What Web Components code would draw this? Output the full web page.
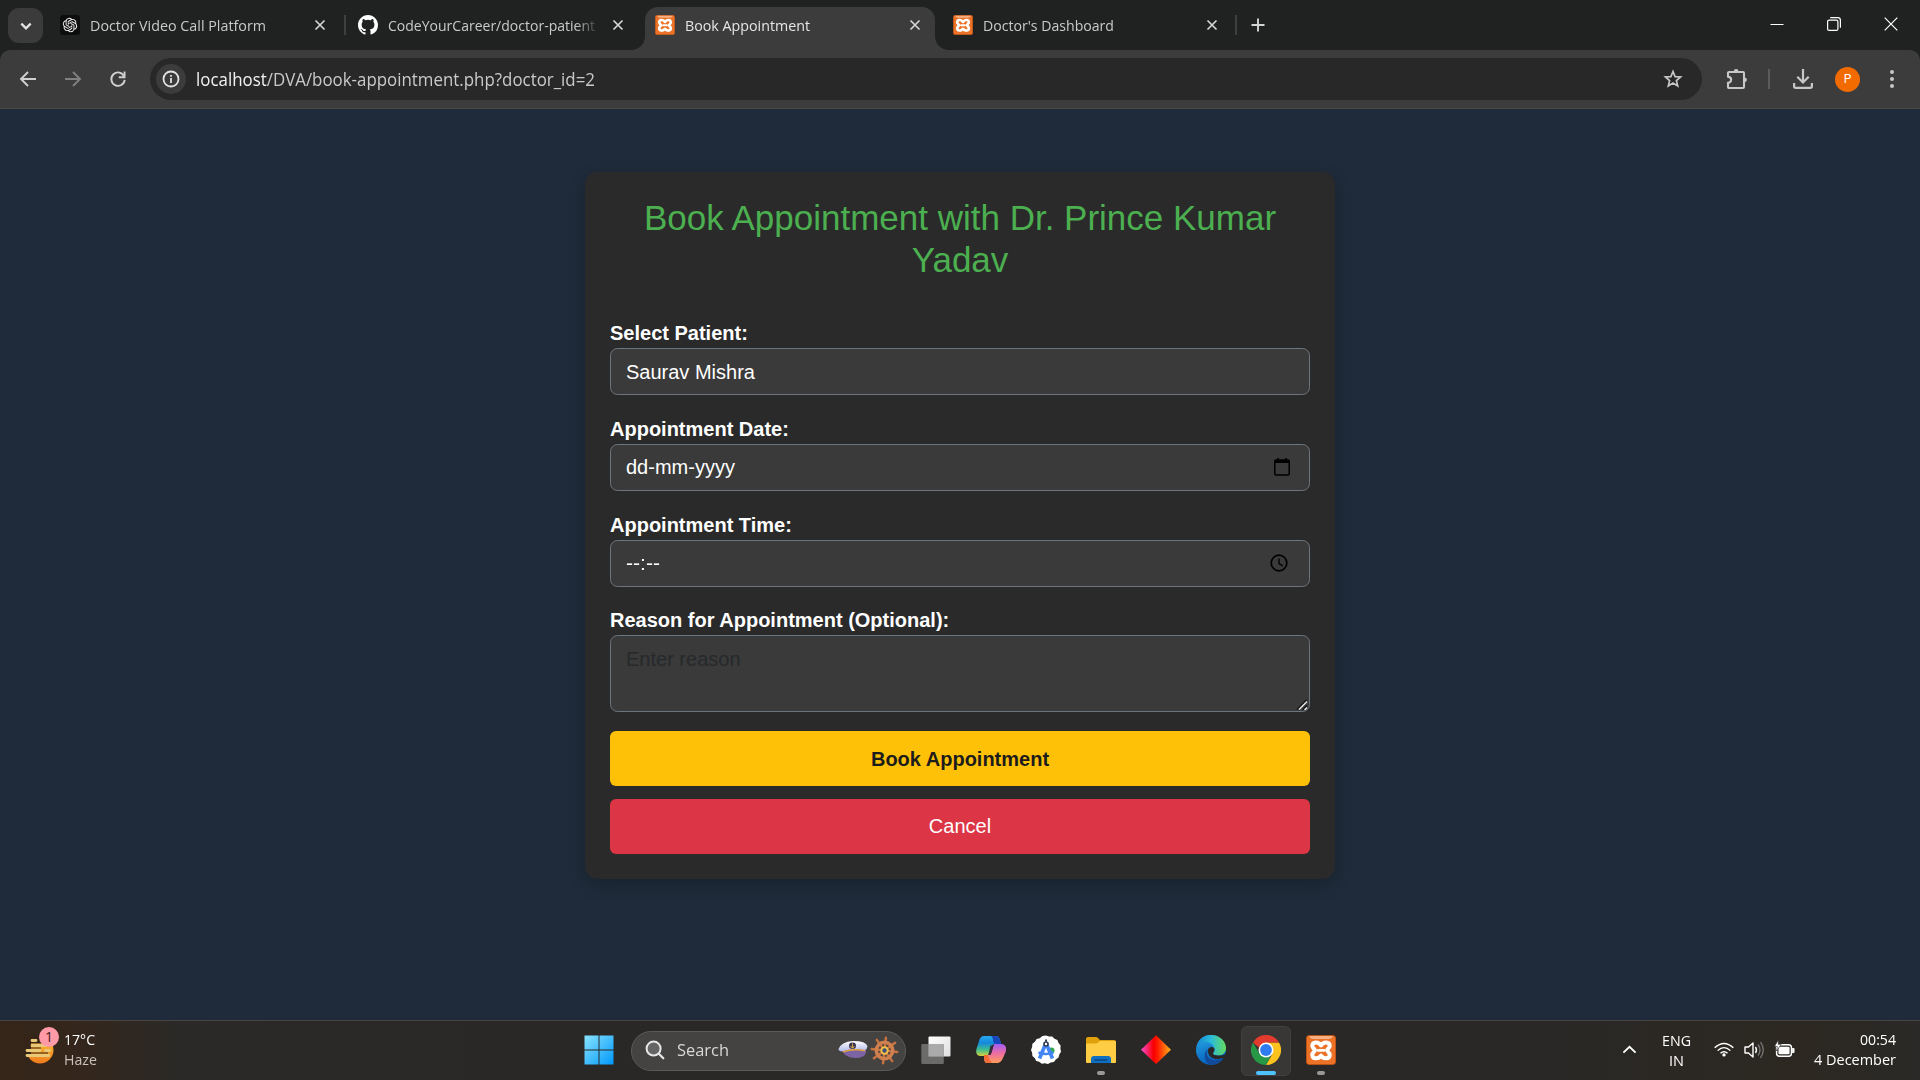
<!DOCTYPE html>
<html lang="en"><head><meta charset="utf-8"><title>Book Appointment</title>
<style>
html,body{margin:0;height:1080px;overflow:hidden;background:#1f2b3a}
body{font-family:"Open Sans","Noto Sans",sans-serif}
</style></head><body>
<desktop-screen></desktop-screen>
<script>
const XAMPP='<rect x=".4" y=".4" width="29.2" height="29.2" rx="3" fill="#ec7227" stroke="#c9540f" stroke-width=".8"/><path d="M3 1h24q-1 3-5 3H8Q4 4 3 1z" fill="#f5b184"/><path d="M15 10.400C12.500 6.300 6.300 6.600 6.300 11c0 2.200 2.600 3 2.600 4.300s-2.600 2.200-2.600 4.600c0 4.200 6.200 4.600 8.700.8 2.500 3.800 8.700 3.400 8.700-.8 0-2.400-2.600-3.200-2.600-4.600s2.600-2.100 2.600-4.300C23.700 6.600 17.500 6.300 15 10.400z" fill="none" stroke="#fff" stroke-width="4" stroke-linejoin="round"/><path d="M12 15.400h6" stroke="#fff" stroke-width="2.700" stroke-linecap="round"/>';
const ICONS={
 down:['0 0 12 12','<path d="M2 4l4 4 4-4" fill="none" stroke="#e3e3e3" stroke-width="2"/>'],
 gpt:['0 0 20 20','<rect width="20" height="20" rx="3" fill="#0d0d0d"/><g transform="translate(2.800 2.800) scale(.6)" fill="#f2f2f2"><path d="M22.280 9.820a5.980 5.980 0 0 0-.52-4.910 6.050 6.050 0 0 0-6.510-2.900A6.070 6.070 0 0 0 4.980 4.180a5.980 5.980 0 0 0-4 2.900 6.050 6.050 0 0 0 .75 7.100 5.980 5.980 0 0 0 .51 4.910 6.050 6.050 0 0 0 6.510 2.900A5.980 5.980 0 0 0 13.260 24a6.060 6.060 0 0 0 5.770-4.210 5.990 5.990 0 0 0 4-2.900 6.060 6.060 0 0 0-.75-7.070zm-9.020 12.610a4.480 4.480 0 0 1-2.880-1.040l4.920-2.840a.8.8 0 0 0 .39-.68v-6.740l2.020 1.170.04.05v5.580a4.500 4.500 0 0 1-4.490 4.500zM3.600 18.300a4.470 4.470 0 0 1-.54-3.010l4.930 2.850a.77.77 0 0 0 .78 0l5.840-3.370v2.330l-4.870 2.850a4.500 4.500 0 0 1-6.140-1.650zM2.340 7.900a4.490 4.490 0 0 1 2.370-1.970v5.680a.77.77 0 0 0 .39.68l5.810 3.350-2.020 1.170-4.900-2.770A4.500 4.500 0 0 1 2.340 7.900zm16.600 3.850l-5.840-3.380 2.020-1.160 4.900 2.780a4.490 4.490 0 0 1-.68 8.100v-5.680a.79.79 0 0 0-.4-.66zm2-3.020l-4.910-2.870a.78.78 0 0 0-.79 0L9.410 9.230V6.900l4.860-2.800a4.500 4.500 0 0 1 6.680 4.640zM8.310 12.860l-2.020-1.160V6.070a4.500 4.500 0 0 1 7.380-3.450L8.700 5.460a.8.800 0 0 0-.39.680zm1.100-2.360l2.600-1.500 2.600 1.500v3l-2.600 1.500-2.600-1.500z"/></g>'],
 github:['0 0 16 16','<path fill="#fff" d="M8 0C3.580 0 0 3.580 0 8c0 3.540 2.290 6.530 5.470 7.590.4.070.55-.17.55-.38 0-.19-.01-.82-.01-1.490-2.010.37-2.530-.49-2.690-.94-.09-.23-.48-.94-.82-1.130-.28-.15-.68-.52-.01-.53.63-.01 1.080.58 1.230.82.72 1.210 1.870.87 2.330.66.07-.52.28-.87.51-1.070-1.780-.2-3.640-.89-3.640-3.950 0-.87.310-1.590.82-2.150-.08-.2-.36-1.020.08-2.120 0 0 .67-.21 2.200.82a7.700 7.700 0 0 1 4 0c1.530-1.040 2.200-.82 2.200-.82.44 1.100.16 1.920.08 2.120.51.56.82 1.270.82 2.150 0 3.070-1.870 3.750-3.650 3.950.29.25.54.73.54 1.480 0 1.070-.01 1.930-.01 2.200 0 .21.15.46.55.38A8.010 8.010 0 0 0 16 8c0-4.420-3.580-8-8-8z"/>'],
 xampp:['0 0 30 30',XAMPP],
 x:['0 0 12 12','<path d="M1.500 1.500l9 9M10.500 1.500l-9 9" stroke="#d5d5d5" stroke-width="1.700"/>'],
 plus:['0 0 14 14','<path d="M7 .5v13M.5 7h13" stroke="#d5d5d5" stroke-width="1.900"/>'],
 min:['0 0 14 14','<path d="M.5 7.500h13" stroke="#fff"/>'],
 restore:['0 0 14 14','<rect x=".600" y="3.100" width="10.300" height="10.300" rx="1.500" fill="none" stroke="#fff" stroke-width="1.200"/><path d="M3.200.6h7.500q2.700 0 2.700 2.700v7.500" fill="none" stroke="#fff" stroke-width="1.200"/>'],
 winx:['0 0 14 14','<path d="M.7.7l12.600 12.600M13.300.7L.7 13.300" stroke="#fff" stroke-width="1.200"/>'],
 back:['0 0 18 18','<path d="M17 9H2.500M9 2L2 9l7 7" fill="none" stroke="#d0d0d0" stroke-width="1.900"/>'],
 fwd:['0 0 18 18','<path d="M1 9h14.500M9 2l7 7-7 7" fill="none" stroke="#808080" stroke-width="1.900"/>'],
 reload:['0 0 18 18','<path d="M15.200 6.500A6.700 6.700 0 1 0 15.700 9.800" fill="none" stroke="#d0d0d0" stroke-width="1.900"/><path d="M16.500 1.500v6.700H9.800V6.300h4.800V1.500z" fill="#d0d0d0"/>'],
 info:['0 0 18 18','<circle cx="9" cy="9" r="7.500" fill="none" stroke="#e3e3e3" stroke-width="1.800"/><path d="M9 8v5M9 5v1.700" stroke="#e3e3e3" stroke-width="1.800"/>'],
 star:['0 0 20 20','<path d="M10 2.500l2.100 5.100 5.500.4-4.200 3.600 1.300 5.400-4.700-2.900L5.300 17l1.300-5.400L2.400 8l5.500-.4z" fill="none" stroke="#c7c7c7" stroke-width="1.700"/>'],
 puzzle:['0 0 22 22','<path d="M3 4h14q1 0 1 1v14q0 1-1 1H3q-1 0-1-1v-4.200c4.200-.6 4.200-5.600 0-6.200V5q0-1 1-1z" fill="none" stroke="#c7c7c7" stroke-width="2.100"/><path d="M7.700 3.500a2.400 2.400 0 0 1 4.800 0zM18.500 9.400a2.400 2.400 0 0 1 0 4.800z" fill="#c7c7c7"/>'],
 download:['0 0 20 20','<path d="M10 0v13M4.300 7.800L10 13.500l5.700-5.700" fill="none" stroke="#c7c7c7" stroke-width="2.200"/><path d="M1.100 14v3.300q0 1.600 1.600 1.600h14.600q1.600 0 1.600-1.600V14" fill="none" stroke="#c7c7c7" stroke-width="2.200"/>'],
 dots:['0 0 6 20','<g fill="#c7c7c7"><circle cx="3" cy="3" r="2"/><circle cx="3" cy="10" r="2"/><circle cx="3" cy="17" r="2"/></g>'],
 calendar:['0 0 18 20','<path d="M3 3h12q1.200 0 1.200 1.200v12.600q0 1.200-1.200 1.200H3q-1.200 0-1.200-1.200V4.200Q1.800 3 3 3z" fill="none" stroke="#000" stroke-width="1.500"/><path d="M1.500 3h15v3h-15zM4 1h1.800v2H4zM12.200 1H14v2h-1.800z"/>'],
 clock:['0 0 18 18','<circle cx="9" cy="9" r="7.800" fill="none" stroke="#000" stroke-width="1.700"/><path d="M9 4.600v5l3.800 2.300" fill="none" stroke="#000" stroke-width="1.400"/>'],
 grip:['0 0 11 11','<path d="M0 10.500L9.500 1M6 10.500l4-4" stroke="#111" stroke-width="1.500"/><path d="M2 10.500L10 2.500M7.500 11L10 8.500" stroke="#e0e0e0" stroke-width="1.600"/>'],
 weather:['0 0 32 32','<defs><linearGradient id="a" x1="0" y1="0" x2="0" y2="1"><stop offset="0" stop-color="#ffc83a"/><stop offset="1" stop-color="#ee7a1c"/></linearGradient></defs><circle cx="16" cy="16" r="13.500" fill="url(#a)"/><path d="M0 0h32v5H20v4H0z" fill="#352519"/><path d="M0 4h20v4H7v12H0z" fill="#352519"/><g stroke="#e9c978" stroke-width="2.800" stroke-linecap="round"><path d="M8 6.500h4M8 11.500h14M3 16.500h13M21.500 16.500h4M3 21.500h22"/></g><path d="M7 9h14M5 14h12M6 19h18" stroke="#3a291b" stroke-width="1.500" opacity=".65"/>'],
 start:['0 0 30 30','<defs><linearGradient id="a" x2="1" y2="1"><stop stop-color="#89e3ff"/><stop offset="1" stop-color="#0098fa"/></linearGradient></defs><path fill="url(#a)" d="M.5.500h14v14H.5zM15.500.500h14v14h-14zM.5 15.500h14v14H.5zM15.500 15.500h14v14h-14z"/>'],
 search:['0 0 20 20','<circle cx="8.600" cy="8.600" r="7" fill="#656565" stroke="#e7e7e7" stroke-width="2"/><path d="M13.800 13.800l4.500 4.500" stroke="#e7e7e7" stroke-width="2.200" stroke-linecap="round"/>'],
 hat:['0 0 30 20','<defs><linearGradient id="a" x1="0" y1="0" x2="0" y2="1"><stop stop-color="#fff"/><stop offset="1" stop-color="#b0b8ea"/></linearGradient></defs><path d="M5 11q10-3 23-1 1 9-11 9Q8 18.500 5 13z" fill="#7c64a4"/><path d="M.5 9.500Q3 2 15 1q13 0 14.500 5.500 0 2.500-3 4.500-11-3-22 1-4 0-4-2.500z" fill="url(#a)"/><path d="M5 12.300q11-3.600 22-1" stroke="#e0a040" stroke-width="1.600" fill="none"/><circle cx="14.500" cy="6" r="3.500" fill="#35324c"/><path d="M14.500 3.500v5M12.800 6.200q.2 2.200 1.700 2.200t1.700-2.200" stroke="#e0b050" stroke-width=".9" fill="none"/>'],
 wheel:['0 0 30 30','<g stroke="#c8733f" stroke-width="2.500" stroke-linecap="round"><path d="M16.500 1.800l-3 26.400M26 7L4 23M28.200 16.500l-26.400-3M23 26L7 4"/></g><circle cx="15" cy="15" r="8.500" fill="none" stroke="#d0804e" stroke-width="3.600"/><circle cx="15" cy="15" r="3.300" fill="#39507a" stroke="#f2c04a" stroke-width="2"/>'],
 taskview:['0 0 30 30','<defs><linearGradient id="a" x2="1" y2="1"><stop stop-color="#fff"/><stop offset="1" stop-color="#dedede"/></linearGradient></defs><rect x="7.500" y="1.500" width="22" height="20" rx="1" fill="url(#a)"/><rect x=".3" y="9" width="22.500" height="20" rx="1" fill="#777" opacity=".85"/><path d="M7.500 9h15.300v12.500H7.500z" fill="#aaa"/>'],
 copilot:['0 0 30 30','<defs><linearGradient id="a" x1="0" y1="0" x2="0" y2="1"><stop stop-color="#28a9ee"/><stop offset=".35" stop-color="#1388dd"/><stop offset=".7" stop-color="#42c08a"/><stop offset="1" stop-color="#dccf3c"/></linearGradient><linearGradient id="b" x1="0" y1="0" x2="0" y2="1"><stop stop-color="#a25cf4"/><stop offset=".5" stop-color="#ee6f9f"/><stop offset="1" stop-color="#ff9d5a"/></linearGradient></defs><path d="M8 1h12q3 0 4 4l1 4h-6q-3 0-4 4l-3 8H4q-5-1-3.500-7L3 6q1.500-5 5-5z" fill="url(#a)"/><path d="M15 1h5q3 0 4 4l1 4h-5q-3 0-3-4 0-3-2-4z" fill="#1747ba"/><path d="M18 9h8q5 1 4 7l-3 7q-2 5-6 5H11q-3 0-3-5l1-3h3q3 0 4-4z" fill="url(#b)"/><path d="M8 20h4q1 5 4 8h-5q-3-1-3-8z" fill="#f36a35"/><path d="M14.500 10.500h3L14.700 20h-2.400z" fill="#332e37"/>'],
 studio:['0 0 30 30','<path fill="#fff" d="M15 .5l3 1.100 3.200-.1 2.300 2.200 2.900 1.200 1.200 3 2 2.500-.2 3.200.6 3.100-1.700 2.800-.8 3.100-2.700 1.800-1.900 2.500-3.200.5L17 29l-3-.7-3.200.4-2.600-1.900-3-.9-1.500-2.800L1.400 21l-.3-3.200L0 14.900l1.100-3L1.400 8.700l2.500-2 1.700-2.700 3.100-.7L11.400.9z"/><circle cx="20.500" cy="15.500" r="3" fill="#34a853"/><path d="M15 8L8.500 23.500M15 8l6.500 15.500" stroke="#4285f4" stroke-width="3.700"/><path d="M7.500 17.500q7.500 3 15-.2" stroke="#4285f4" stroke-width="2.500" fill="none"/><circle cx="15" cy="9" r="2" fill="#fff" stroke="#303c50" stroke-width="1.600"/><path d="M15 4.500v2" stroke="#303c50" stroke-width="2"/>'],
 folder:['0 0 30 30','<path d="M0 4q0-2 2-2h8q1 0 2 1l2 2H28q2 0 2 2v8H0z" fill="#dfa00b"/><path d="M0 9.500q0-1 1-1h8.500q1.500 0 2.500-1L14 6h15q1 0 1 1v20q0 1-1 1H1q-1 0-1-1z" fill="#ffcd43"/><path d="M5 28v-4q0-3 3-3h14q3 0 3 3v4z" fill="#0f6fc0"/><path d="M8.500 25h13" stroke="#0a4484" stroke-width="1.500"/>'],
 diamond:['0 0 30 30','<defs><linearGradient id="a"><stop stop-color="#ff4bd8"/><stop offset=".42" stop-color="#f80000"/><stop offset=".55" stop-color="#ff1a00"/><stop offset="1" stop-color="#ffb319"/></linearGradient></defs><path d="M15 .3L30 14.700 15 29 0 14.700z" fill="url(#a)"/>'],
 edge:['0 0 30 30','<defs><linearGradient id="a"><stop stop-color="#1585d6"/><stop offset=".5" stop-color="#2bbbd8"/><stop offset="1" stop-color="#65dc5c"/></linearGradient><linearGradient id="b" x1="0" y1="0" x2=".3" y2="1"><stop stop-color="#2aa9e6"/><stop offset="1" stop-color="#0561bd"/></linearGradient></defs><circle cx="15" cy="15" r="15" fill="url(#b)"/><path d="M.3 12C2 4 8 0 15 0c9 0 15 6.500 15 13 0 5-4 7.500-8 7.500-3 0-5-1-5-2 0-1 1.500-1.800 1.500-4C18.500 10 14 7 9.500 7 5 7 2 9 .3 12z" fill="url(#a)"/><path d="M11.500 14c-3 8 4 15 16 9-3 4.500-7 7-12.500 7C8 28 7 18 11.500 14z" fill="#124a99"/><path d="M17 18.500c0-1 1.500-1.800 1.500-4 0-1.500-1-2.500-3-2.500-3 0-4 3-3.500 5.500.7 4 5 7 10 6.500 3-.3 5-1.500 6-1l2-4c-2 1.500-5 1.500-8 1.500-3 0-5-1-5-2z" fill="#292827"/><path d="M30 17v13h-9q5-2 7-7z" fill="#292827"/>'],
 chrome:['0 0 30 30','<path d="M15 15V7.500h13A15 15 0 0 1 15 30l6.500-11.300z" fill="#fcc31e"/><path d="M2 7.500l6.500 11.200L15 22.500l4.500-1L15 30A15 15 0 0 1 2 7.500z" fill="#269846"/><path d="M2 7.500A15 15 0 0 1 28 7.500H15l-7 5z" fill="#e33b2e"/><circle cx="15" cy="15" r="7.500" fill="#fff"/><circle cx="15" cy="15" r="5.900" fill="#2f7cf0"/>'],
 up:['0 0 16 10','<path d="M1.500 8.500L8 2l6.500 6.500" fill="none" stroke="#fff" stroke-width="1.900"/>'],
 wifi:['0 0 20 16','<g fill="none" stroke="#fff" stroke-width="1.500"><path d="M.7 6.200q9.300-9.200 18.600 0M3.600 9.200q6.400-6.400 12.800 0M6.500 12.100q3.500-3.500 7 0"/></g><circle cx="10" cy="13.800" r="1.700" fill="#fff"/>'],
 volume:['0 0 20 18','<path d="M1 6h3.500L9 2v14l-4.500-4H1z" fill="none" stroke="#fff" stroke-width="1.400" stroke-linejoin="round"/><path d="M11.500 6q2 3 0 6" stroke="#fff" stroke-width="1.400" fill="none"/><path d="M14 3.500q4 5.500 0 11M16.500 1.200q5.500 7.800 0 15.600" fill="none" stroke="#777" stroke-width="1.300"/>'],
 battery:['0 0 22 18','<rect x="2.700" y="4.700" width="15.600" height="11.600" rx="3" fill="none" stroke="#fff" stroke-width="1.500"/><rect x="4.700" y="6.700" width="11.600" height="7.600" rx="1" fill="#fff"/><path d="M19 8h1.500q1 0 1 1v3q0 1-1 1H19z" fill="#fff"/><path d="M4.500 0L.5 6.500h3L2.500 11l5-6.500h-3z" fill="#fff" stroke="#292827" stroke-width=".6"/>']
};
const define=(name,css,html,ready)=>customElements.define(name,class extends HTMLElement{
 connectedCallback(){if(this.shadowRoot)return;const r=this.attachShadow({mode:'open'});
 const t=document.createElement('template');t.innerHTML='<style>:host{box-sizing:border-box}*{box-sizing:border-box}'+css+'</style>'+(typeof html==='function'?html(this):html);
 r.append(t.content.cloneNode(true));if(ready)ready(this,r);}
});
define('ui-icon',':host{display:block;flex:none}svg{display:block;width:100%;height:100%}',h=>{
 const i=ICONS[h.getAttribute('name')];const w=h.getAttribute('w'),t=h.getAttribute('h')||w;h.style.width=w+'px';h.style.height=t+'px';
 return `<svg viewBox="${i[0]}" preserveAspectRatio="none">${i[1]}</svg>`});
/* single line of text condensed to an exact advance width */
define('fit-text',':host{display:block;flex:none;white-space:nowrap}span{display:inline-block;transform-origin:0 50%}','<span><slot></slot></span>',(h,r)=>{
 const s=r.querySelector('span'),w=+h.getAttribute('w');const n=s.getBoundingClientRect().width;h.style.width=w+'px';s.style.transform=`scaleX(${w/n})`});
define('browser-tab',`:host{display:flex;align-items:center;height:36px;width:290px;flex:none;padding:0 14px 0 10px;color:#c9cbca;font-size:15px;position:relative}
:host([active]){background:#3c3c3c;border-radius:13px 13px 0 0;color:#e5e5e5;height:43px;padding-bottom:7px}
:host([active])::before,:host([active])::after{content:"";position:absolute;bottom:0;width:13px;height:13px}
:host([active])::before{left:-13px;background:radial-gradient(circle at 0 0,transparent 12.500px,#3c3c3c 13px)}
:host([active])::after{right:-13px;background:radial-gradient(circle at 100% 0,transparent 12.500px,#3c3c3c 13px)}
.t{flex:1;margin:0 16px 0 10px;line-height:22px}:host([fade]) .t{-webkit-mask:linear-gradient(90deg,#000 90%,transparent 102%)}`,
h=>`<ui-icon name="${h.getAttribute('icon')}" w="20"></ui-icon><div class="t"><fit-text w="${h.getAttribute('w')}">${h.getAttribute('label')}</fit-text></div><ui-icon name="x" w="12"></ui-icon>`);
define('tab-strip',`:host{display:flex;height:50px;background:#202221;padding-top:7px}
.menu{width:35px;height:35px;margin:1px 7px 0 8px;border-radius:11px;background:#3a3b3a;display:grid;place-items:center}
.sep{width:2px;height:20px;margin-top:8px;background:#3e403f;flex:none}.end{display:flex;margin:10px 22px 0 auto;gap:43px}`,
`<div class="menu"><ui-icon name="down" w="14"></ui-icon></div>
<browser-tab icon="gpt" label="Doctor Video Call Platform" w="176" style="width:294px;padding-right:18px"></browser-tab><div class="sep"></div>
<browser-tab icon="github" label="CodeYourCareer/doctor-patient" w="207" fade style="width:299px;padding-left:12px;padding-right:21px"></browser-tab>
<browser-tab active icon="xampp" label="Book Appointment" w="125"></browser-tab>
<browser-tab icon="xampp" label="Doctor's Dashboard" w="131" style="width:300px;padding-left:18px;padding-right:17px"></browser-tab><div class="sep"></div>
<ui-icon name="plus" w="14" style="margin:11px 0 0 14px"></ui-icon>
<div class="end"><ui-icon name="min" w="14"></ui-icon><ui-icon name="restore" w="14"></ui-icon><ui-icon name="winx" w="14"></ui-icon></div>`);
define('address-bar',`:host{display:flex;align-items:center;height:59px;background:#3c3c3c;border-bottom:1px solid #4a4c46;padding-left:19px}
.wrap{flex:none;display:flex;align-items:center}.wrap.nav{gap:27px}
.box{width:1552px;height:42px;border-radius:21px;background:#282828;margin-left:23px;display:flex;align-items:center;padding:0 19px 0 6px;flex:none}
.i{width:30px;height:30px;border-radius:50%;background:#3c3c3c;display:grid;place-items:center;margin-right:10px}
.host{color:#f1f1f1}fit-text{font-size:18px;line-height:24px;color:#c9c9c9}
.sep{width:2px;height:20px;background:#5b5b5b;margin:0 23px 0 20px}
.av{width:25px;height:25px;border-radius:50%;background:#f26b00;color:#fff;font:12px/25px Roboto,sans-serif;text-align:center;margin:0 29px 0 22px}`,
`<div class="wrap nav"><ui-icon name="back" w="18"></ui-icon><ui-icon name="fwd" w="18"></ui-icon><ui-icon name="reload" w="18"></ui-icon></div>
<div class="box"><div class="i"><ui-icon name="info" w="18"></ui-icon></div><fit-text w="399"><span class="host">localhost</span>/DVA/book-appointment.php?doctor_id=2</fit-text><ui-icon name="star" w="20" style="margin-left:auto"></ui-icon></div>
<ui-icon name="puzzle" w="22" style="margin-left:24px"></ui-icon><div class="sep"></div><ui-icon name="download" w="20"></ui-icon><div class="av">P</div><ui-icon name="dots" w="6" h="20"></ui-icon>`);
define('form-field',`:host{display:block;font-size:20px;color:#fff}label{display:block;font-weight:700;line-height:30px}
.c{height:47px;border:1px solid #6c757d;border-radius:7.500px;background:#3a3a3a;padding:8px 15px;line-height:30px;display:flex;justify-content:space-between}
:host([icon]:not([area])) .c{padding:7px 15px 8px}
:host([area]) .c{height:77px;color:#26292c;padding-right:1px;padding-bottom:1px}ui-icon{align-self:center}:host([area]) ui-icon{align-self:end}`,
h=>`<label>${h.getAttribute('label')}</label><div class="c"><slot></slot>${h.getAttribute('icon')?`<ui-icon name="${h.getAttribute('icon')}" w="${h.getAttribute('iw')}" h="${h.getAttribute('ih')}" style="margin-right:${h.getAttribute('ir')}px"></ui-icon>`:''}</div>`);
define('form-button',':host{display:block;height:55px;border-radius:6px;font-size:20px;line-height:55px;text-align:center}','<slot></slot>');
define('appointment-card',`:host{display:block;width:750px;height:707px;background:#2a2a2a;border-radius:13px;box-shadow:0 5px 18px rgba(0,0,0,.2);padding:25px;font-family:"Liberation Sans",Arial,sans-serif}
h2{margin:0 0 37px;font-size:35px;line-height:42px;font-weight:400;color:#4caf50;text-align:center}
form-field{margin-bottom:19px}`,
`<h2>Book Appointment with Dr. Prince Kumar<br>Yadav</h2>
<form-field label="Select Patient:">Saurav Mishra</form-field>
<form-field label="Appointment Date:" icon="calendar" iw="18" ih="20" ir="3">dd-mm-yyyy</form-field>
<form-field label="Appointment Time:" icon="clock" iw="18" ih="18" ir="6" style="margin-bottom:18px"><fit-text w="34">--:--</fit-text></form-field>
<form-field area label="Reason for Appointment (Optional):" icon="grip" iw="11" ih="11" ir="0">Enter reason</form-field>
<form-button style="background:#ffc107;color:#1c1c1c;font-weight:700;line-height:57px;margin-bottom:13px">Book Appointment</form-button>
<form-button style="background:#dc3545;color:#fff">Cancel</form-button>`);
define('task-item',`:host{display:grid;place-items:center;width:50px;height:50px;margin-right:5px;flex:none;border-radius:6px;position:relative}
ui-icon{margin-top:-1px}
:host([active]){background:#383736;border:1px solid #41403f}
:host([mark])::after{content:"";position:absolute;bottom:1px;left:21px;width:8px;height:4px;border-radius:2px;background:#999}
:host([active])::after{content:"";position:absolute;bottom:0;left:14px;width:20px;height:4px;border-radius:2px;background:#4cc2ff}`,
h=>`<ui-icon name="${h.getAttribute('icon')}" w="30"></ui-icon>`);
define('task-bar',`:host{display:flex;height:60px;border-top:1px solid #464543;background:linear-gradient(90deg,#352519 0,#34261c 80px,#2a2927 180px,#292827 480px,#292827 1500px,#2c2821 1800px,#2a2927 1920px);color:#fff;font-size:15px;line-height:20px;align-items:center}
.weather{display:flex;width:574px;padding-left:24px;align-items:center}.w{position:relative;margin-right:8px;margin-top:-2px}.wt{margin-top:-4px}
.badge{position:absolute;left:15px;top:-7px;width:20px;height:20px;border-radius:50%;background:#ff9aa6;color:#3b1c1e;text-align:center;font-size:14px;line-height:20px}
.search{width:275px;height:40px;border:1px solid #5b5a59;border-radius:20px;background:#444342;display:flex;align-items:center;padding:0 6px 0 13px;margin:0 5px 0 7px;flex:none;color:#d8d8d8}
.tray{display:flex;align-items:center;margin-left:auto;padding-right:24px}.r{display:flex;flex-direction:column;align-items:flex-end;margin-top:-4px}.lang{align-items:center;margin:-2px 23px 0 25px}.haze{color:#c9c2bc}`,
`<div class="weather"><div class="w"><ui-icon name="weather" w="32"></ui-icon><div class="badge">1</div></div><div class="wt"><fit-text w="31">17°C</fit-text><fit-text w="33" class="haze">Haze</fit-text></div></div>
<task-item icon="start" style="margin-right:0"></task-item>
<div class="search"><ui-icon name="search" w="20" style="margin-top:-2px"></ui-icon><fit-text w="52" style="font-size:16.500px;margin-left:12px;margin-top:-1px">Search</fit-text><ui-icon name="hat" w="30" h="19" style="margin:-2px 2px 0 auto"></ui-icon><ui-icon name="wheel" w="29"></ui-icon></div>
<task-item icon="taskview"></task-item><task-item icon="copilot"></task-item><task-item icon="studio"></task-item><task-item icon="folder" mark></task-item><task-item icon="diamond"></task-item><task-item icon="edge"></task-item><task-item icon="chrome" active></task-item><task-item icon="xampp" mark></task-item>
<div class="tray"><ui-icon name="up" w="15" h="9" style="margin-top:-2px"></ui-icon><div class="r lang"><fit-text w="29">ENG</fit-text><fit-text w="15">IN</fit-text></div><ui-icon name="wifi" w="20" h="15" style="margin-top:-2px"></ui-icon><ui-icon name="volume" w="20" h="18" style="margin:-2px 10px 0"></ui-icon><ui-icon name="battery" w="21" h="18" style="margin-top:-4px"></ui-icon><div class="r" style="margin-left:19px"><fit-text w="36">00:54</fit-text><fit-text w="82">4 December</fit-text></div></div>`);
define('desktop-screen',`:host{display:flex;flex-direction:column;width:1920px;height:1080px}tab-strip,address-bar,task-bar{flex:none}
.bar{background:#202221;flex:none}address-bar{border-radius:10px 10px 0 0}main{flex:1;display:flex;justify-content:center;align-items:flex-start;padding-top:63px;background:#1f2b3a}`,
`<tab-strip></tab-strip><div class="bar"><address-bar></address-bar></div><main><appointment-card></appointment-card></main><task-bar></task-bar>`);
</script></body></html>
